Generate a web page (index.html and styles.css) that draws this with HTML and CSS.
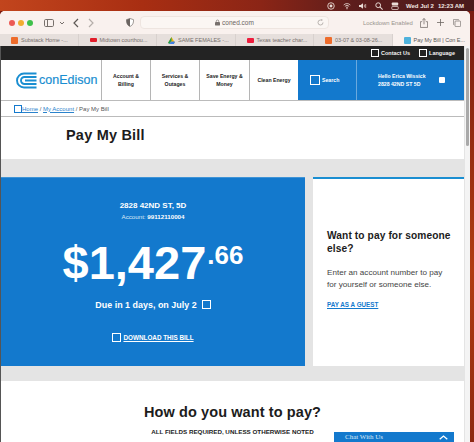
FILE: index.html
```html
<!DOCTYPE html>
<html lang="en">
<head>
<meta charset="utf-8">
<title>Pay My Bill</title>
<link rel="stylesheet" href="styles.css">
</head>
<body>
<div class="menubar">
  <svg class="mb-ico" width="8" height="8" viewBox="0 0 11 11"><circle cx="5.5" cy="5.5" r="4.5" fill="none" stroke="#eadcd6" stroke-width="1.2"/><circle cx="5.5" cy="5.5" r="2" fill="#eadcd6"/></svg>
  <svg class="mb-ico" width="8" height="8" viewBox="0 0 12 10"><path d="M1 3.5a7 7 0 0 1 10 0M2.800 5.500a4.500 4.500 0 0 1 6.400 0M4.500 7.300a2 2 0 0 1 3 0" fill="none" stroke="#eadcd6" stroke-width="1.200"/><circle cx="6" cy="9" r=".9" fill="#eadcd6"/></svg>
  <svg class="mb-ico" width="8" height="8" viewBox="0 0 12 10"><path d="M0 3.500h2.500L6 1v8L2.500 6.500H0z" fill="#eadcd6"/><path d="M8 3v4M10 2v6" stroke="#eadcd6" stroke-width="1"/></svg>
  <svg class="mb-ico" width="8" height="8" viewBox="0 0 10 10"><circle cx="4" cy="4" r="3" fill="none" stroke="#eadcd6" stroke-width="1.200"/><path d="M6.200 6.200L9.500 9.500" stroke="#eadcd6" stroke-width="1.300"/></svg>
  <svg class="mb-ico" width="8" height="8" viewBox="0 0 10 10"><rect x="1" y="0.500" width="8" height="4" rx="1" fill="#eadcd6"/><rect x="1" y="5.500" width="8" height="4" rx="1" fill="none" stroke="#eadcd6"/></svg>
  <span class="mb-clock">Wed Jul 2</span>
  <span class="mb-clock">12:23 AM</span>
</div>
<div class="window">
  <div class="browser">
    <div class="toolbar">
      <span class="dot dot-r"></span><span class="dot dot-y"></span><span class="dot dot-g"></span>
      <svg class="tb-sidebar" width="22" height="8" viewBox="0 0 22 8"><rect x=".5" y=".5" width="9" height="7" rx="1.200" fill="none" stroke="#77706c"/><path d="M3.500 1v6" stroke="#77706c"/><path d="M16 3l2 2 2-2" fill="none" stroke="#77706c"/></svg>
      <svg class="tb-back" width="6" height="10" viewBox="0 0 6 10"><path d="M5 1L1 5l4 4" fill="none" stroke="#5e5855" stroke-width="1.200"/></svg>
      <svg class="tb-fwd" width="6" height="10" viewBox="0 0 6 10"><path d="M1 1l4 4-4 4" fill="none" stroke="#b5aeaa" stroke-width="1.200"/></svg>
      <svg class="tb-shield" width="8" height="9" viewBox="0 0 10 11"><path d="M5 .5l4.500 1.500c0 4-1 7-4.500 8.500C1.500 9 .5 6 .5 2z" fill="#fff" stroke="#6b6461" stroke-width=".8"/><path d="M5 .5L.5 2c0 4 1 7 4.500 8.500z" fill="#6b6461"/></svg>
      <div class="urlbar">
        <svg class="lock" width="5" height="7" viewBox="0 0 6 7"><rect y="3" width="6" height="4" rx=".5" fill="#77706c"/><path d="M1.500 3V2a1.500 1.500 0 0 1 3 0v1" fill="none" stroke="#77706c" stroke-width=".8"/></svg>
        <span>coned.com</span>
        <svg class="reload" width="7" height="7" viewBox="0 0 7 7"><path d="M6 3.500A2.500 2.500 0 1 1 3.500 1H5" fill="none" stroke="#aaa39f" stroke-width=".8"/><path d="M4.500 0v2l1.300-1z" fill="#aaa39f"/></svg>
      </div>
      <span class="lockdown">Lockdown Enabled</span>
      <svg class="tb-share" width="8" height="10" viewBox="0 0 9 11"><path d="M2.500 4H.5v6.500h8V4h-2M4.500 7V.5M2.500 2.300L4.500.5l2 1.800" fill="none" stroke="#6b6461" stroke-width=".8"/></svg>
      <svg class="tb-plus" width="7" height="7" viewBox="0 0 9 9"><path d="M4.500 0v9M0 4.500h9" stroke="#6b6461" stroke-width="1"/></svg>
      <svg class="tb-copy" width="8" height="8" viewBox="0 0 10 10"><rect x="2.500" y="2.500" width="7" height="7" rx="1" fill="none" stroke="#6b6461" stroke-width=".8"/><path d="M7 1.500V1a.5.5 0 0 0-.5-.5h-5.500a.5.5 0 0 0-.5.500v5.500a.5.5 0 0 0 .5.500h.5" fill="none" stroke="#6b6461" stroke-width=".8"/></svg>
    </div>
    <div class="tabs">
      <div class="tab"><span class="fav fav-orange"></span><span class="tab-text">Substack Home -...</span></div>
      <div class="tab"><span class="fav fav-red"></span><span class="tab-text">Midtown courthou...</span></div>
      <div class="tab"><svg class="fav-svg" width="7" height="7" viewBox="0 0 7 7"><path d="M3.500 0L7 6H0z" fill="#f5b400"/><path d="M3.500 0L0 6l1.500 1 2-3.500z" fill="#1a9a5a"/><path d="M1.500 7L3 4.500h4L6 7z" fill="#3f7fe8"/></svg><span class="tab-text">SAME FEMALES -...</span></div>
      <div class="tab"><span class="fav fav-yt"></span><span class="tab-text">Texas teacher char...</span></div>
      <div class="tab"><span class="fav fav-orange"></span><span class="tab-text">03-07 &amp; 03-08-26...</span></div>
      <div class="tab tab-active"><span class="fav fav-blue"></span><span class="tab-text">Pay My Bill | Con E...</span></div>
    </div>
    <div class="page">
      <div class="content">
        <div class="topbar">
          <span class="top-item"><span class="box box-white"></span>Contact Us</span>
          <span class="top-item"><span class="box box-white"></span>Language</span>
        </div>
        <nav class="nav">
          <div class="logo">
            <svg width="21" height="17" viewBox="0 0 21 17"><path d="M20.500 1.500H8a7 7 0 0 0 0 14h12.500M20.500 5H8.500a3.500 3.500 0 0 0 0 7h12M20.500 8.500H9" fill="none" stroke="#1a8ed1" stroke-width="1.900"/></svg>
            <span class="logo-text">conEdison</span>
          </div>
          <a class="nav-item">Account &amp;<br>Billing</a>
          <a class="nav-item">Services &amp;<br>Outages</a>
          <a class="nav-item nav-wide">Save Energy &amp;<br>Money</a>
          <a class="nav-item">Clean Energy</a>
          <a class="nav-search"><span class="box box-search"></span>Search</a>
          <a class="nav-user"><span>Hello Erica Wissick<br>2828 42ND ST 5D</span><span class="user-dot"></span></a>
        </nav>
        <div class="crumbs"><span class="box box-crumb"></span><a>Home</a> / <a>My Account</a> / Pay My Bill</div>
        <h1 class="title">Pay My Bill</h1>
        <div class="panels">
          <section class="bill">
            <div class="addr">2828 42ND ST, 5D</div>
            <div class="acct">Account: <b>99112110004</b></div>
            <div class="amount">$1,427<sup class="cents">.66</sup></div>
            <div class="due">Due in 1 days, on July 2<span class="box box-due"></span></div>
            <div class="download"><span class="box box-dl"></span><a>DOWNLOAD THIS BILL</a></div>
          </section>
          <aside class="guest">
            <h2>Want to pay for someone else?</h2>
            <p>Enter an account number to pay for yourself or someone else.</p>
            <a>PAY AS A GUEST</a>
          </aside>
        </div>
        <section class="how">
          <h2>How do you want to pay?</h2>
          <p>ALL FIELDS REQUIRED, UNLESS OTHERWISE NOTED</p>
        </section>
      </div>
      <div class="scrollbar"><div class="thumb"></div></div>
      <div class="chat"><span>Chat With Us</span><svg width="9" height="5" viewBox="0 0 9 5"><path d="M.7 4.300L4.500 1l3.800 3.300" fill="none" stroke="#fff" stroke-width="1.300"/></svg></div>
    </div>
  </div>
</div>
</body>
</html>
```
FILE: styles.css
```css
* { box-sizing: border-box; }
html, body { margin: 0; padding: 0; }
body {
  width: 474px; height: 442px; overflow: hidden;
  font-family: "Liberation Sans", Arial, sans-serif;
  background: #7a1d12;
  display: flex; flex-direction: column;
}
a { color: inherit; }
.menubar {
  height: 11px; flex: none;
  background: linear-gradient(90deg, #c2451d 0%, #a82e12 30%, #8b2516 55%, #5c1d1c 75%, #4a1a1c 100%);
  display: flex; justify-content: flex-end; align-items: center;
  padding-right: 10px; gap: 5px; color: #f0e6e2; font-size: 6px; font-weight: 700;
}
.mb-ico { flex: none; margin-right: 3px; }
.mb-clock { margin-left: -1px; white-space: nowrap; }
.window { flex: 1; min-height: 0; padding-right: 4px; background: linear-gradient(180deg, #7a1c12 0%, #b03c12 60%, #8e2810 100%); }
.browser { height: 100%; display: flex; flex-direction: column; border-top-right-radius: 5px; border-top-left-radius: 5px; overflow: hidden; background: #fff; }
.toolbar {
  height: 23px; flex: none; background: #f9f1ee;
  display: flex; align-items: center; padding-left: 9px; color: #77706c; font-size: 7px;
}
.dot { width: 6px; height: 6px; border-radius: 50%; margin-right: 3px; flex: none; }
.dot-r { background: #ec5a55; }
.dot-y { background: #f2ac30; }
.dot-g { background: #3fc04b; margin-right: 11px; }
.tb-sidebar { margin-right: 7px; flex: none; }
.tb-back { margin-right: 9px; flex: none; }
.tb-fwd { margin-right: 32px; flex: none; }
.tb-shield { margin-right: 6px; flex: none; }
.urlbar {
  width: 189px; height: 13px; flex: none; background: #fbf6f3; border: 1px solid #eee5e0; border-radius: 4px;
  display: flex; align-items: center; justify-content: center; gap: 2px; position: relative; color: #6b6461; font-size: 6.5px;
}
.reload { position: absolute; right: 4px; top: 2px; }
.lockdown { margin-left: 34px; width: 50px; flex: none; white-space: nowrap; color: #98918d; font-size: 5.9px; }
.tb-share { margin-left: 7px; flex: none; }
.tb-plus { margin-left: 9px; flex: none; }
.tb-copy { margin-left: 9px; flex: none; }
.tabs { height: 12px; flex: none; display: flex; background: #e6dfdc; }
.tab {
  flex: 1; display: flex; align-items: center; padding-left: 11px; gap: 3px;
  border-right: 1px solid #d8d1ce; font-size: 5.5px; color: #77706c; white-space: nowrap; overflow: hidden;
}
.tab-active { background: #f9f1ee; border-right: 0; color: #555; }
.fav { width: 7px; height: 7px; flex: none; border-radius: 1px; }
.fav-svg { flex: none; }
.fav-orange { background: #ee6c2b; }
.fav-red { background: #e11d2a; height: 4px; }
.fav-yt { background: #ee1c3c; height: 5px; }
.fav-blue { background: #4fb2dc; }
.page { flex: 1; min-height: 0; display: flex; position: relative; overflow: hidden; border-left: 1px solid #555; }
.content { flex: 1; min-width: 0; background: #fff; display: flex; flex-direction: column; }
.scrollbar { width: 6px; flex: none; background: #f4f4f4; border-left: 1px solid #e4e4e4; padding: 2px 1px 0 1px; }
.thumb { height: 98px; background: #a9a9a9; border-radius: 2px; }
.box { display: inline-block; flex: none; }
.topbar {
  height: 14px; flex: none; background: #232323; display: flex; justify-content: flex-end; align-items: center;
  padding-right: 9px; gap: 9px; color: #f2f2f2; font-size: 5.5px; font-weight: 700;
}
.top-item { display: flex; align-items: center; gap: 2px; }
.box-white { width: 8px; height: 8px; border: 1px solid #fff; }
.nav { height: 41px; flex: none; display: flex; border-bottom: 1px solid #bbb; }
.logo { width: 100px; flex: none; display: flex; align-items: center; padding-left: 15px; gap: 2px; }
.logo-text { color: #1a8ed1; font-size: 12.5px; font-weight: 400; -webkit-text-stroke: .2px #1a8ed1; }
.nav-item {
  width: 49px; flex: none; border-left: 1px solid #b5b5b5; display: flex; align-items: center; justify-content: center;
  text-align: center; color: #222; font-size: 5.2px; font-weight: 700; line-height: 8px; white-space: nowrap;
}
.nav-wide { width: 50px; }
.nav-search {
  width: 58px; flex: none; background: #1379cd; color: #fff; display: flex; align-items: center; gap: 2px; padding-left: 12px;
  font-size: 5.2px; font-weight: 700;
}
.box-search { width: 10px; height: 10px; border: 1px solid #fff; }
.nav-user {
  flex: 1; background: #1379cd; color: #fff; border-left: 1px solid #6aa9de; display: flex; align-items: center; gap: 13px;
  padding-left: 21px; font-size: 5.2px; font-weight: 700; line-height: 8px; white-space: nowrap;
}
.user-dot { width: 6px; height: 6px; background: #fff; border-radius: 1px; }
.crumbs {
  height: 16px; flex: none; border-bottom: 1px solid #bbb; display: flex; align-items: center; padding-left: 13px; gap: 0;
  font-size: 6px; color: #555; white-space: pre;
}
.crumbs a { color: #2b83cc; text-decoration: underline; }
.box-crumb { width: 8px; height: 8px; border: 1px solid #1379cd; }
.title { height: 42px; flex: none; margin: 0; padding: 0 0 0 65px; font-size: 14.5px; line-height: 36px; color: #1c1c1c; font-weight: 700; letter-spacing: .2px; }
.panels { height: 222px; flex: none; background: #e4e4e4; display: flex; gap: 8px; padding: 18px 0 15px 0; }
.bill {
  width: 304px; flex: none; background: #1379cd; color: #fff; border-top: 1px solid #3f94d6;
  display: flex; flex-direction: column; align-items: center; padding-top: 23px;
}
.addr { font-size: 8px; font-weight: 700; line-height: 9px; }
.acct { font-size: 6.2px; line-height: 9px; margin-top: 2px; color: #dbe9f6; }
.acct b { color: #fff; }
.amount { font-size: 47px; font-weight: 700; line-height: 50px; margin-top: 17px; display: flex; align-items: flex-start; white-space: nowrap; }
.cents { font-size: 26px; line-height: 34px; vertical-align: baseline; margin-left: 1px; }
.due { font-size: 8.95px; font-weight: 700; margin-top: 11px; display: flex; align-items: center; gap: 5px; line-height: 12px; }
.box-due { width: 9px; height: 9px; border: 1px solid #fff; margin-top: -2px; }
.download { margin-top: 22px; font-size: 6.35px; font-weight: 700; display: flex; align-items: center; gap: 2px; }
.download a { text-decoration: underline; }
.box-dl { width: 9px; height: 9px; border: 1px solid #fff; }
.guest { flex: 1; background: #fff; border-top: 2px solid #1a8ed1; padding: 50px 8px 0 14px; }
.guest h2 { margin: 0; font-size: 10.2px; line-height: 13px; color: #1c1c1c; font-weight: 700; letter-spacing: .1px; }
.guest p { margin: 12px 0 0; padding-right: 12px; font-size: 8.1px; line-height: 12px; color: #444; }
.guest a { display: block; margin-top: 10px; font-size: 6.3px; font-weight: 700; color: #1379cd; text-decoration: underline; }
.how { flex: 1; text-align: center; padding-top: 23px; }
.how h2 { margin: 0; font-size: 14.5px; line-height: 17px; color: #1c1c1c; font-weight: 700; letter-spacing: .1px; }
.how p { margin: 7px 0 0; font-size: 6.25px; line-height: 8px; font-weight: 700; color: #222; }
.chat {
  position: absolute; left: 333px; bottom: 0; width: 120px; height: 10px; background: #1379cd; color: #dbe9f6;
  font-family: "Liberation Serif", serif; font-size: 7px; display: flex; align-items: center; justify-content: space-between; padding: 0 6px 0 11px;
}
```
